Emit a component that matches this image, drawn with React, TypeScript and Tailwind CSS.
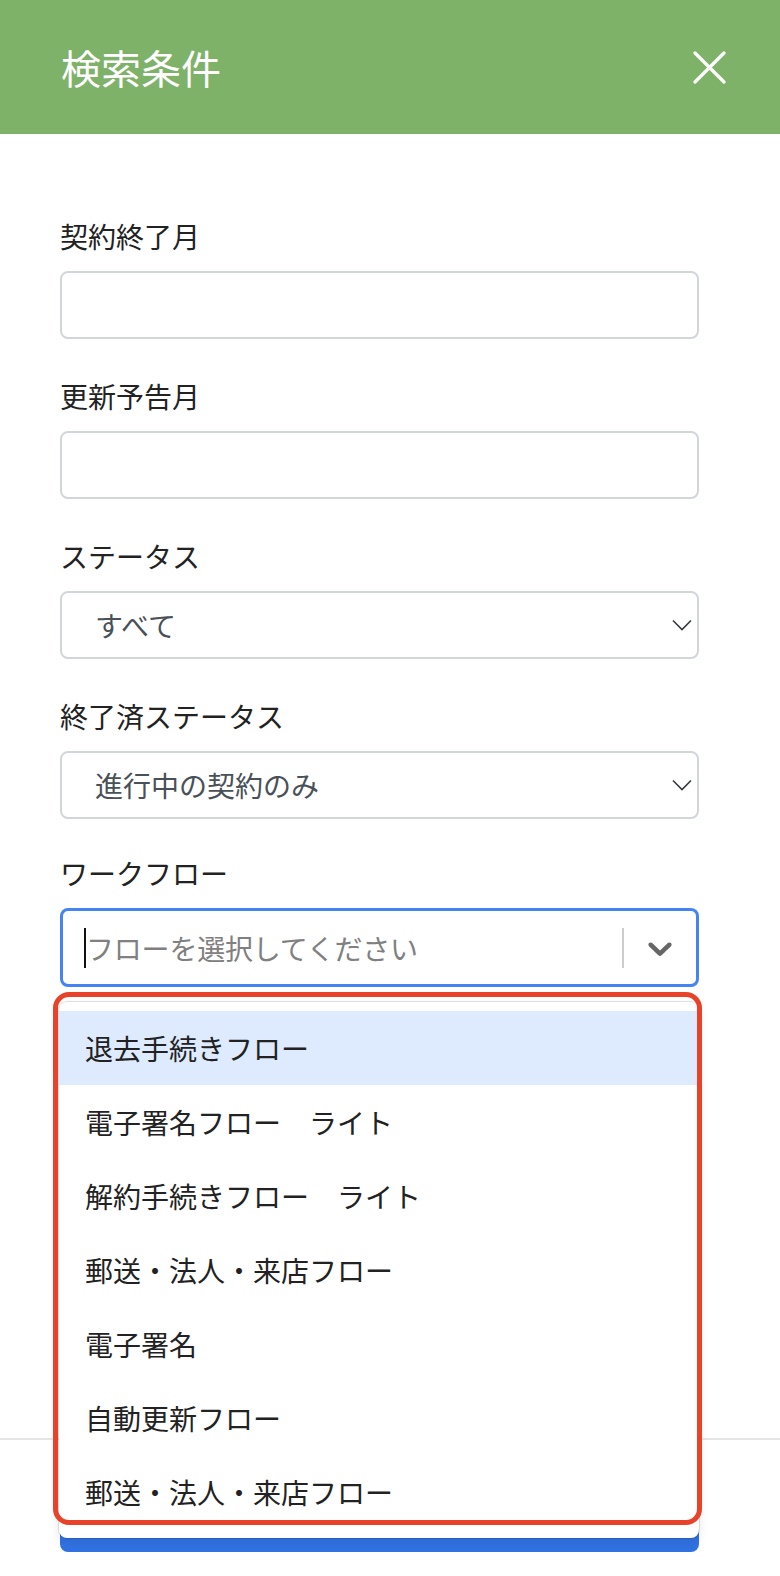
import React from "react";

const FONT = { fontFamily: '"Noto Sans CJK JP", "Noto Sans", sans-serif' };

function Thin() {
  return (
    <svg width="20" height="12" viewBox="0 0 20 12" fill="none" className="shrink-0">
      <path d="M1 1.5 L10 10.5 L19 1.5" stroke="#343a40" strokeWidth="1.6" />
    </svg>
  );
}

function Field({ label, children, className = "" }: { label: string; children?: React.ReactNode; className?: string }) {
  return (
    <div className={className}>
      <div className="text-[28px] leading-[40px] text-[#222] mb-[15px]">{label}</div>
      {children}
    </div>
  );
}

function TextBox() {
  return <div className="h-[68px] w-full rounded-[8px] border-2 border-[#d2d6db] bg-white" />;
}

function SelectBox({ value }: { value: string }) {
  return (
    <div className="h-[68px] w-full rounded-[8px] border-2 border-[#d2d6db] bg-white flex items-center pl-[33px] pr-[5px]">
      <span className="flex-1 text-[28px] text-[#495057]">{value}</span>
      <Thin />
    </div>
  );
}

const OPTIONS = [
  "退去手続きフロー",
  "電子署名フロー　ライト",
  "解約手続きフロー　ライト",
  "郵送・法人・来店フロー",
  "電子署名",
  "自動更新フロー",
  "郵送・法人・来店フロー",
];

export default function App() {
  return (
    <div className="w-[780px] h-[1576px] bg-white flex flex-col overflow-hidden" style={FONT}>
      <header className="h-[134px] shrink-0 bg-[#7fb269] flex items-center justify-between pl-[61px] pr-[54px]">
        <h1 className="text-[40px] leading-none text-white font-normal">検索条件</h1>
        <svg width="33" height="33" viewBox="0 0 33 33">
          <path d="M2 2 L31 31 M31 2 L2 31" stroke="white" strokeWidth="3.2" strokeLinecap="round" />
        </svg>
      </header>

      <main className="flex-1 pt-[82px] pl-[60px] w-[699px] flex flex-col gap-[37px]">
        <Field label="契約終了月">
          <TextBox />
        </Field>
        <Field label="更新予告月">
          <TextBox />
        </Field>
        <Field label="ステータス">
          <SelectBox value="すべて" />
        </Field>
        <Field label="終了済ステータス">
          <SelectBox value="進行中の契約のみ" />
        </Field>
        <Field label="ワークフロー" className="-mt-[3px]">
          <div className="relative z-20">
            <div className="h-[79px] w-full rounded-[8px] border-[3px] border-[#4485f3] bg-white flex items-center">
              <div className="flex-1 flex items-center pl-[21px]">
                <span className="w-[2px] h-[40px] bg-[#111]" />
                <span className="text-[28px] tracking-[-0.2px] text-[#808080]">フローを選択してください</span>
              </div>
              <span className="w-[2px] h-[40px] bg-[#cccccc]" />
              <div className="px-[16px] flex items-center">
                <svg width="40" height="40" viewBox="0 0 20 20" fill="#666666">
                  <path d="M4.516 7.548c0.436-0.446 1.043-0.481 1.576 0l3.908 3.747 3.908-3.747c0.533-0.481 1.141-0.446 1.574 0 0.436 0.445 0.408 1.197 0 1.615-0.406 0.418-4.695 4.502-4.695 4.502-0.217 0.223-0.502 0.335-0.787 0.335s-0.57-0.112-0.789-0.335c0 0-4.287-4.084-4.695-4.502s-0.436-1.17 0-1.615z" />
                </svg>
              </div>
            </div>

            <div className="absolute left-[-1px] right-0 top-[calc(100%+15px)] bg-white rounded-[8px] py-[9px] shadow-[0_0_0_1px_rgba(0,0,0,0.1),0_4px_11px_rgba(0,0,0,0.1)]">
              {OPTIONS.map((o, i) => (
                <div
                  key={i}
                  className={`h-[74px] flex items-center pl-[26px] text-[28px] text-[#222] ${i === 0 ? "bg-[#deebff]" : ""}`}
                >
                  {o}
                </div>
              ))}
            </div>

            <div className="absolute left-[-7px] right-[-3px] top-[calc(100%+5px)] h-[533px] rounded-[16px] border-[5px] border-[#e8432a] pointer-events-none" />
          </div>
        </Field>
      </main>

      <footer className="shrink-0 border-t-2 border-[#e5e5e5] pt-[30px] pb-[24px] pl-[60px] w-[780px]">
        <div className="w-[639px] h-[82px] rounded-[8px] bg-[#3172e3]" />
      </footer>
    </div>
  );
}
